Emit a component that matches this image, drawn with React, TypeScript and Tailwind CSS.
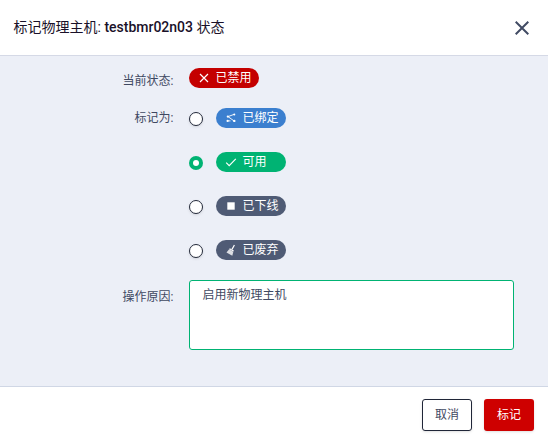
import type { ReactNode } from "react";

type Option = { label: string; tone: string; icon: ReactNode; checked?: boolean };

const CrossIcon = () => (
  <svg className="h-3 w-3" viewBox="0 0 12 12" fill="none" stroke="currentColor" strokeWidth="1.15">
    <path d="M2 2l8 8M10 2l-8 8" />
  </svg>
);

const BindIcon = () => (
  <svg className="h-3 w-3" viewBox="0 0 12 12" fill="none" stroke="currentColor" strokeWidth="0.9">
    <path d="M3 4.6l6-2.2M3 4.6l6 4.3M2.5 8.9h3" />
    <g fill="currentColor" stroke="none">
      <circle cx="9.3" cy="2.4" r="1" />
      <circle cx="2.8" cy="4.6" r="1.1" />
      <circle cx="2.6" cy="8.9" r="1.1" />
      <circle cx="9.3" cy="8.9" r="1.2" />
    </g>
  </svg>
);

const CheckIcon = () => (
  <svg className="h-3 w-3" viewBox="0 0 12 12" fill="none" stroke="currentColor" strokeWidth="1.15">
    <path d="M1.2 6.6l3 3 6.6-6.8" />
  </svg>
);

const StopIcon = () => (
  <svg className="h-3 w-3" viewBox="0 0 12 12" fill="currentColor">
    <path d="M2.3 2.3h7.4v7.4H2.3z" />
  </svg>
);

const BroomIcon = () => (
  <svg className="h-3 w-3" viewBox="0 0 12 12">
    <path d="M9.4 1L7 5.4" stroke="currentColor" strokeWidth="1.2" fill="none" />
    <path d="M4.8 4.2l4.1 2.4-.5 1-4.2-2.4z" fill="currentColor" />
    <path d="M4.1 5.3l4.2 2.4-1 4L1.5 8.4z" fill="currentColor" opacity=".8" />
  </svg>
);

const options: Option[] = [
  { label: "已绑定", tone: "bg-[#3b7fcf]", icon: <BindIcon /> },
  { label: "可用", tone: "bg-[#00b373]", icon: <CheckIcon />, checked: true },
  { label: "已下线", tone: "bg-[#4f5b75]", icon: <StopIcon /> },
  { label: "已废弃", tone: "bg-[#4f5b75]", icon: <BroomIcon /> },
];

function Badge({ tone, icon, children }: { tone: string; icon: ReactNode; children: ReactNode }) {
  return (
    <span className={`flex h-5 w-[70px] items-center rounded-full pl-[9px] text-white ${tone}`}>
      {icon}
      <span className="ml-[5.5px] whitespace-nowrap leading-5">{children}</span>
    </span>
  );
}

function Radio({ checked }: { checked?: boolean }) {
  return checked ? (
    <span className="mt-0.5 flex h-3.5 w-3.5 items-center justify-center rounded-full bg-[#00b373]">
      <span className="h-1.5 w-1.5 rounded-full bg-white" />
    </span>
  ) : (
    <span className="mt-0.5 h-3.5 w-3.5 rounded-full border border-[#242a3b] bg-white shadow-sm" />
  );
}

export default function App() {
  return (
    <div className="flex h-[441px] w-[548px] flex-col overflow-hidden bg-white font-[Roboto,'Noto_Sans_CJK_SC',sans-serif] text-[12px] text-[#3f4962]">
      <header className="flex h-14 shrink-0 items-center justify-between border-b border-[#d5d9e6] pr-[19px] pb-px pl-[13.5px]">
        <h1 className="text-[14px] leading-5 text-[#1a1129]">
          标记物理主机: <span className="font-medium">testbmr02n03</span> 状态
        </h1>
        <svg className="mt-px h-3.5 w-3.5" viewBox="0 0 14 14" fill="none" stroke="#414b64" strokeWidth="2">
          <path d="M.7.7l12.6 12.6M13.3.7L.7 13.3" />
        </svg>
      </header>

      <main className="h-[330px] shrink-0 bg-[#eceff7] pt-3">
        <div className="flex h-10 items-start">
          <span className="mr-[15.5px] w-[173.5px] pt-[3px] text-right leading-5">当前状态:</span>
          <Badge tone="bg-[#c40000]" icon={<CrossIcon />}>已禁用</Badge>
        </div>
        <div className="flex h-[172px] items-start">
          <span className="mr-[15.5px] w-[173.5px] text-right leading-5">标记为:</span>
          <div className="flex flex-col gap-6">
            {options.map((option) => (
              <div key={option.label} className="flex items-center gap-[13px]">
                <Radio checked={option.checked} />
                <Badge tone={option.tone} icon={option.icon}>{option.label}</Badge>
              </div>
            ))}
          </div>
        </div>
        <div className="flex items-start">
          <span className="mr-[15.5px] w-[173.5px] pt-[7px] text-right leading-5">操作原因:</span>
          <textarea
            className="h-[70px] w-[325px] resize-none rounded-[3px] border border-[#00b373] bg-white px-[12.5px] py-1 leading-5 outline-none"
            defaultValue="启用新物理主机"
          />
        </div>
      </main>

      <footer className="flex h-[55px] shrink-0 items-start justify-end gap-3 border-t border-[#d0d7e5] pt-3 pr-[14px]">
        <button className="h-8 w-[50px] rounded-[3px] border border-[#202638] bg-white shadow-sm">取消</button>
        <button className="h-8 w-[50px] rounded-[3px] bg-[#ce0000] text-white shadow-sm">标记</button>
      </footer>
    </div>
  );
}
